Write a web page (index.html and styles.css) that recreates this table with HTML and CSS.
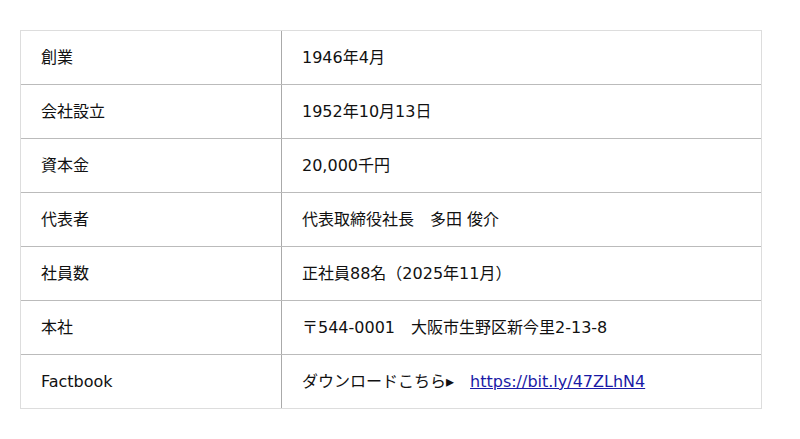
FILE: index.html
```html
<!DOCTYPE html>
<html lang="ja">
<head>
<meta charset="utf-8">
<link rel="stylesheet" href="styles.css">
</head>
<body>
<div class="info">
  <div class="row"><div class="label">創業</div><div class="value">1946年4月</div></div>
  <div class="row"><div class="label">会社設立</div><div class="value">1952年10月13日</div></div>
  <div class="row"><div class="label">資本金</div><div class="value">20,000千円</div></div>
  <div class="row"><div class="label">代表者</div><div class="value">代表取締役社長　多田 俊介</div></div>
  <div class="row"><div class="label">社員数</div><div class="value">正社員88名（2025年11月）</div></div>
  <div class="row"><div class="label">本社</div><div class="value">〒544-0001　大阪市生野区新今里2-13-8</div></div>
  <div class="row"><div class="label">Factbook</div><div class="value">ダウンロードこちら<span class="arrow">▸</span><a href="#" class="link">https://bit.ly/47ZLhN4</a></div></div>
</div>
</body>
</html>
```
FILE: styles.css
```css
html, body {
  margin: 0;
  padding: 0;
  background: #fff;
}
body {
  padding: 30px 0 0 20px;
  font-family: "DejaVu Sans", "Noto Sans CJK JP", sans-serif;
  font-size: 16px;
  line-height: 20px;
  color: #111;
}
.info {
  width: 742px;
  box-sizing: border-box;
  border: 1px solid #ddd;
}
.row {
  display: grid;
  grid-template-columns: 261px 1fr;
  height: 54px;
  box-sizing: border-box;
  border-bottom: 1px solid #bbb;
}
.row:last-child {
  height: 53px;
  border-bottom: none;
}
.label {
  border-right: 1px solid #aaa;
  padding: 0 20px;
  display: flex;
  align-items: center;
}
.value {
  padding: 0 20px;
  display: flex;
  align-items: center;
}
.arrow {
  font-size: 16px;
  margin-right: 16px;
}
.link {
  color: #1a1aa6;
  text-decoration: underline;
}
```
